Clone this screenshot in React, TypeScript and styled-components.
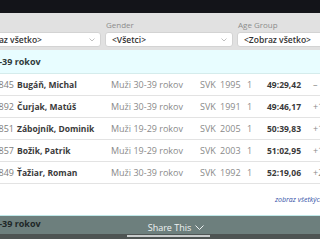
import React from "react";
import styled, { createGlobalStyle } from "styled-components";

const GlobalStyle = createGlobalStyle`
  html, body {
    margin: 0;
    padding: 0;
    background: #ffffff;
  }
  body {
    font-family: "Open Sans", "DejaVu Sans", sans-serif;
  }
`;

const Screen = styled.div`
  width: 320px;
  height: 240px;
  overflow: hidden;
  display: flex;
  flex-direction: column;
  background: #fff;
`;

const TopBar = styled.div`
  height: 13px;
  flex: none;
  background: #131419;
`;

const Content = styled.div`
  width: 400px;
  margin-left: -40px;
  display: flex;
  flex-direction: column;
  flex: none;
`;

const FilterBar = styled.div`
  height: 37px;
  background: #e1e1e1;
  display: grid;
  grid-template-columns: 133px 128px 128px;
  column-gap: 4px;
  padding-left: 8px;
  align-content: start;
  padding-top: 6px;
  box-sizing: border-box;
`;

const Filter = styled.div`
  display: flex;
  flex-direction: column;
`;

const FilterLabel = styled.span`
  height: 13px;
  font-size: 8px;
  line-height: 11px;
  color: #8c8c8c;
  padding-left: 1px;
`;

const Select = styled.div`
  height: 15px;
  box-sizing: border-box;
  background: #fff;
  border: 1px solid #d3d3d3;
  border-radius: 3px;
  display: flex;
  align-items: center;
  justify-content: space-between;
  padding: 0 5px 0 6px;
  font-size: 8.5px;
  font-weight: 600;
  color: #333;
`;

const Chevron = () => (
  <svg width="6" height="4" viewBox="0 0 6 4">
    <path d="M0.5 0.5 L3 3 L5.5 0.5" fill="none" stroke="#b9b9b9" strokeWidth="0.9" />
  </svg>
);

const GroupHeader = styled.div<{ $dark?: boolean }>`
  height: ${({ $dark }) => ($dark ? "15px" : "24px")};
  box-sizing: border-box;
  display: flex;
  align-items: center;
  padding-left: 5px;
  font-size: 9px;
  font-weight: 700;
  color: ${({ $dark }) => ($dark ? "#1e2727" : "#2f3a3a")};
  background: ${({ $dark }) => ($dark ? "transparent" : "#e8fdff")};
  border-bottom: 1px solid ${({ $dark }) => ($dark ? "transparent" : "#d5ecec")};
`;

const Row = styled.div`
  height: 22px;
  box-sizing: border-box;
  display: grid;
  grid-template-columns: 57px 94px 89px 20px 25px 22px 46px 1fr;
  align-items: center;
  border-bottom: 1px solid #e3e3e3;
  font-size: 9px;
  color: #8a8a8a;
`;

const Bib = styled.span`
  text-align: right;
  padding-right: 3px;
  color: #7d7d7d;
`;

const Name = styled.span`
  font-size: 8.5px;
  font-weight: 700;
  color: #3a3a3a;
  white-space: nowrap;
`;

const Cell = styled.span`
  white-space: nowrap;
`;

const Place = styled.span`
  padding-left: 2px;
`;

const Time = styled.span`
  font-size: 8.5px;
  font-weight: 700;
  color: #3a3a3a;
`;

const LinkRow = styled.div`
  height: 31px;
  padding-left: 315px;
  line-height: 24px;
  box-sizing: border-box;
`;

const MoreLink = styled.a`
  font-size: 7px;
  font-style: italic;
  color: #3552a8;
  white-space: nowrap;
`;

const Footer = styled.div`
  position: relative;
  height: 19px;
  flex: none;
  background: #6d7f7d;
  border-top: 1px solid #bfe8e8;
  box-sizing: border-box;
`;

const FooterInner = styled.div`
  width: 400px;
  margin-left: -40px;
`;

const ShareTab = styled.div`
  position: absolute;
  left: 127px;
  top: 0;
  width: 83px;
  height: 21px;
  display: flex;
  flex-direction: column;
  align-items: center;
  justify-content: space-between;
`;

const ShareText = styled.div`
  display: flex;
  align-items: center;
  gap: 4px;
  margin-top: 5px;
  margin-left: 15px;
  font-size: 9px;
  color: #eef2f2;
`;

const ShareLine = styled.div`
  width: 83px;
  height: 2px;
  background: #c9cdcd;
`;

const BottomStrip = styled.div`
  flex: none;
  height: 5px;
  background: #4e5453;
`;

type Result = {
  bib: string;
  name: string;
  cat: string;
  nat: string;
  year: string;
  place: string;
  time: string;
  diff: string;
};

const results: Result[] = [
  { bib: "1845", name: "Bugáň, Michal", cat: "Muži 30-39 rokov", nat: "SVK", year: "1995", place: "1", time: "49:29,42", diff: "–" },
  { bib: "1892", name: "Čurjak, Matúš", cat: "Muži 30-39 rokov", nat: "SVK", year: "1991", place: "1", time: "49:46,17", diff: "+16,75" },
  { bib: "1851", name: "Zábojník, Dominik", cat: "Muži 19-29 rokov", nat: "SVK", year: "2005", place: "1", time: "50:39,83", diff: "+1:10,41" },
  { bib: "1857", name: "Božik, Patrik", cat: "Muži 19-29 rokov", nat: "SVK", year: "2003", place: "1", time: "51:02,95", diff: "+1:33,53" },
  { bib: "1849", name: "Ťažiar, Roman", cat: "Muži 30-39 rokov", nat: "SVK", year: "1992", place: "1", time: "52:19,06", diff: "+2:49,64" },
];

export default function App() {
  return (
    <Screen>
      <GlobalStyle />
      <TopBar />
      <Content>
        <FilterBar>
          <Filter>
            <FilterLabel>&nbsp;</FilterLabel>
            <Select>
              <span>&lt;Zobraz všetko&gt;</span>
              <Chevron />
            </Select>
          </Filter>
          <Filter>
            <FilterLabel>Gender</FilterLabel>
            <Select>
              <span>&lt;Všetci&gt;</span>
              <Chevron />
            </Select>
          </Filter>
          <Filter>
            <FilterLabel>Age Group</FilterLabel>
            <Select>
              <span>&lt;Zobraz všetko&gt;</span>
              <Chevron />
            </Select>
          </Filter>
        </FilterBar>
        <GroupHeader>Muži 30-39 rokov</GroupHeader>
        {results.map((r) => (
          <Row key={r.bib}>
            <Bib>{r.bib}</Bib>
            <Name>{r.name}</Name>
            <Cell>{r.cat}</Cell>
            <Cell>{r.nat}</Cell>
            <Cell>{r.year}</Cell>
            <Place>{r.place}</Place>
            <Time>{r.time}</Time>
            <Cell>{r.diff}</Cell>
          </Row>
        ))}
        <LinkRow>
          <MoreLink>zobraz všetkých</MoreLink>
        </LinkRow>
      </Content>
      <Footer>
        <FooterInner>
          <GroupHeader $dark>Muži 30-39 rokov</GroupHeader>
        </FooterInner>
        <ShareTab>
          <ShareText>
            Share This
            <svg width="9" height="5" viewBox="0 0 9 5">
              <path d="M0.5 0.5 L4.5 4.5 L8.5 0.5" fill="none" stroke="#eef2f2" strokeWidth="1" />
            </svg>
          </ShareText>
          <ShareLine />
        </ShareTab>
      </Footer>
      <BottomStrip />
    </Screen>
  );
}
